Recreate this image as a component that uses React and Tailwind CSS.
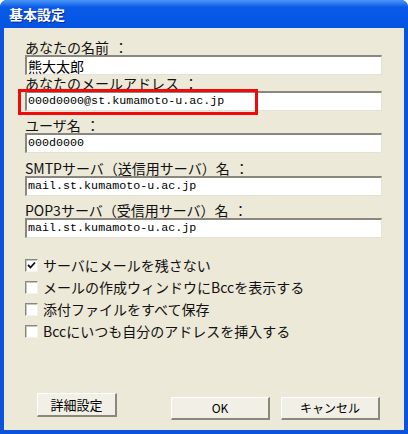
const jp = { fontFamily: '"Noto Sans CJK JP", "Noto Sans", sans-serif' };

const fields = [
  { label: "あなたの名前", value: "熊大太郎", jp: true, gap: "" },
  { label: "あなたのメールアドレス", value: "000d0000@st.kumamoto-u.ac.jp", mark: true, gap: "" },
  { label: "ユーザ名", value: "000d0000", gap: "mt-[6px]" },
  { label: "SMTPサーバ（送信用サーバ）名", value: "mail.st.kumamoto-u.ac.jp", gap: "mt-[7px]" },
  { label: "POP3サーバ（受信用サーバ）名", value: "mail.st.kumamoto-u.ac.jp", gap: "mt-[6px]" },
];

const options = [
  { text: "サーバにメールを残さない", checked: true },
  { text: "メールの作成ウィンドウにBccを表示する", checked: false },
  { text: "添付ファイルをすべて保存", checked: false },
  { text: "Bccにいつも自分のアドレスを挿入する", checked: false },
];

const Field = ({ field }) => (
  <div className={field.gap}>
    <div className="h-[16px] flex items-center text-[14px] leading-none text-[#111] whitespace-nowrap" style={jp}>
      {field.label}
      <span className="ml-[5px]">：</span>
    </div>
    <div className="relative">
      <div className="h-[20px] bg-white border-t-2 border-l-2 border-t-[#8a877c] border-l-[#8a877c] border-r border-b border-r-[#e4e1d6] border-b-[#e4e1d6] flex items-center pl-[1px]">
        {field.jp ? (
          <span className="text-[14px] leading-none text-black" style={jp}>
            {field.value}
          </span>
        ) : (
          <span className="text-[11.7px] leading-none text-black font-['Liberation_Mono',monospace]">
            {field.value}
          </span>
        )}
      </div>
      {field.mark && (
        <div className="absolute left-[-7px] top-[-2px] w-[240px] h-[26px] border-[3px] border-[#f00a0a] pointer-events-none" />
      )}
    </div>
  </div>
);

const Checkbox = ({ checked }) => (
  <div className="w-[13px] h-[13px] bg-white border-t border-l border-t-[#8a877c] border-l-[#8a877c] border-r border-b border-r-[#f4f3ee] border-b-[#f4f3ee] shadow-[inset_1px_1px_0_#c8c5ba] flex items-center justify-center">
    {checked && (
      <svg width="9" height="9" viewBox="0 0 9 9">
        <path d="M1 4 L3.5 6.5 L8 1.5" stroke="#111" strokeWidth="1.8" fill="none" />
      </svg>
    )}
  </div>
);

const Button = ({ children, className = "" }) => (
  <button
    className={`h-[23px] bg-[#f1efe6] border-t border-l border-t-white border-l-white border-r-2 border-b-2 border-r-[#8a877c] border-b-[#8a877c] text-[12px] leading-none text-black flex items-center justify-center ${className}`}
    style={jp}
  >
    {children}
  </button>
);

export default function App() {
  return (
    <div className="w-[408px] h-[434px] bg-white">
      <div className="h-full flex flex-col rounded-t-[7px] bg-[#0b52dc] overflow-hidden">
        <div className="h-[28px] shrink-0 flex items-center pl-[9px] bg-gradient-to-b from-[#4a96f7] via-[#0a5ae8] via-[25%] to-[#0354e2]">
          <span
            className="text-white font-bold text-[14px] leading-none [text-shadow:1px_1px_0_#0b2a8f]"
            style={jp}
          >
            基本設定
          </span>
        </div>
        <div className="flex-1 mx-[4px] mb-[4px] bg-[#ece9d8] flex flex-col pl-[21px] pr-[22px] pt-[11px] pb-[10px]">
          {fields.map((f) => (
            <Field key={f.label} field={f} />
          ))}

          <div className="mt-[16px] flex flex-col">
            {options.map((o) => (
              <div key={o.text} className="h-[22px] flex items-center gap-[5px]">
                <Checkbox checked={o.checked} />
                <span className="text-[14px] leading-none text-[#111] whitespace-nowrap" style={jp}>
                  {o.text}
                </span>
              </div>
            ))}
          </div>

          <div className="mt-auto flex items-end">
            <Button className="w-[80px] h-[24px] ml-[12px] mb-[3px] text-[13px]">詳細設定</Button>
            <Button className="w-[99px] ml-auto">OK</Button>
            <Button className="w-[99px] ml-[11px] mr-[2px]">キャンセル</Button>
          </div>
        </div>
      </div>
    </div>
  );
}
